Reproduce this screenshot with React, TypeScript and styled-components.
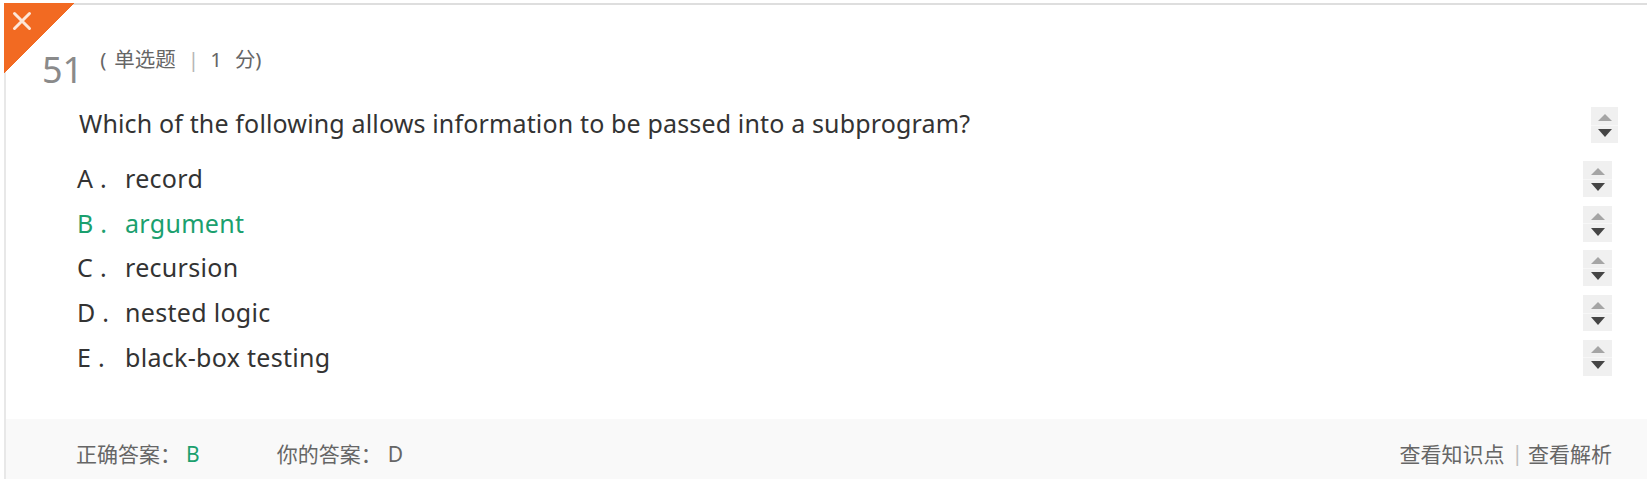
import React from "react";
import styled, { createGlobalStyle } from "styled-components";

const Global = createGlobalStyle`
  html, body { margin: 0; padding: 0; background: #fff; overflow: hidden; }
  body { font-family: "Noto Sans", "Noto Sans CJK SC", sans-serif; color: #333; }
`;

const Card = styled.div`
  position: relative;
  margin: 3px 0 0 4px;
  border-top: 2px solid #dedede;
  border-left: 2px solid #e8e8e8;
`;

const Corner = styled.div`
  position: absolute;
  top: -2px;
  left: -2px;
  width: 70px;
  height: 70px;
  background: linear-gradient(135deg, #f26a22 50%, transparent 50%);
`;

const CloseMark = styled.svg`
  position: absolute;
  top: 6px;
  left: 6px;
  width: 24px;
  height: 24px;
`;

const Header = styled.div`
  display: flex;
  align-items: flex-start;
  padding: 44px 0 0 36px;
  height: 44px;
`;

const Num = styled.span`
  font-size: 36px;
  line-height: 36px;
  color: #8a8a8a;
  margin-top: 3px;
`;

const TypeLabel = styled.span`
  display: flex;
  align-items: center;
  font-size: 20.5px;
  line-height: 21px;
  color: #666;
  margin-left: 17px;
  white-space: pre;
`;

const Paren = styled.span<{ $before: number; $after: number }>`
  margin-left: ${(p) => p.$before}px;
  margin-right: ${(p) => p.$after}px;
`;

const Sep = styled.span`
  color: #b5b5b5;
  margin: 0 11px 0 12px;
`;

const Row = styled.div<{ $indent: number; $right: number; $h: number }>`
  display: flex;
  align-items: center;
  justify-content: space-between;
  height: ${(p) => p.$h}px;
  padding-left: ${(p) => p.$indent}px;
  padding-right: ${(p) => p.$right}px;
`;

const QuestionRow = styled(Row)`
  margin-top: 14px;
`;

const QuestionText = styled.div`
  font-size: 25px;
  letter-spacing: 0.15px;
  color: #333;
  padding-bottom: 4px;
`;

const Options = styled.div`
  margin-top: 14px;
`;

const OptionLine = styled.div<{ $correct?: boolean }>`
  display: flex;
  align-items: center;
  font-size: 25px;
  letter-spacing: 0.3px;
  color: ${(p) => (p.$correct ? "#1ba06e" : "#333")};
  padding-bottom: 2px;
`;

const Key = styled.span`
  width: 48px;
  white-space: pre;
`;

const Spinner = styled.div<{ $w: number }>`
  width: ${(p) => p.$w}px;
  height: 36px;
  display: flex;
  flex-direction: column;
  background: #f0f0f0;
  flex-shrink: 0;
`;

const Half = styled.div`
  flex: 1;
  display: flex;
  align-items: center;
  justify-content: center;
  & + & { border-top: 1px solid #f7f7f7; }
`;

const Up = styled.span`
  width: 0;
  height: 0;
  border-left: 7px solid transparent;
  border-right: 7px solid transparent;
  border-bottom: 7px solid #a5a5a5;
  margin-top: 3px;
`;

const Down = styled.span`
  width: 0;
  height: 0;
  border-left: 7px solid transparent;
  border-right: 7px solid transparent;
  border-top: 8px solid #454545;
  margin-bottom: 3px;
`;

const Footer = styled.div`
  margin-top: 39px;
  background: #f9f9f9;
  height: 72px;
  box-sizing: border-box;
  padding: 0 35px 4px 70px;
  display: flex;
  align-items: center;
  justify-content: space-between;
  font-size: 21px;
  color: #666;
`;

const Answers = styled.div`
  display: flex;
  align-items: center;
`;

const AnswerItem = styled.span<{ $after: number }>`
  margin-right: ${(p) => p.$after}px;
  white-space: pre;
`;

const Val = styled.span<{ $green?: boolean; $gap: number }>`
  color: ${(p) => (p.$green ? "#1ba06e" : "#666")};
  margin-left: ${(p) => p.$gap}px;
`;

const Links = styled.div`
  display: flex;
  align-items: center;
  color: #666;
`;

const LinkSep = styled.span`
  color: #c0c0c0;
  margin: 0 5px 0 7px;
`;

const SpinnerCtl = ({ w }: { w: number }) => (
  <Spinner $w={w}>
    <Half><Up /></Half>
    <Half><Down /></Half>
  </Spinner>
);

const options = [
  { k: "A", t: "record" },
  { k: "B", t: "argument", correct: true },
  { k: "C", t: "recursion" },
  { k: "D", t: "nested logic" },
  { k: "E", t: "black-box testing" },
];

export default function App() {
  return (
    <>
      <Global />
      <Card>
        <Corner>
          <CloseMark viewBox="0 0 24 24">
            <path d="M4.5 4.5 L19.5 19.5 M19.5 4.5 L4.5 19.5" stroke="#fde6d8" strokeWidth="3" strokeLinecap="round" />
          </CloseMark>
        </Corner>
        <Header>
          <Num>51</Num>
          <TypeLabel>
            <Paren $before={0} $after={8}>(</Paren>
            单选题
            <Sep>|</Sep>
            1
            <Paren $before={13} $after={0}>分)</Paren>
          </TypeLabel>
        </Header>
        <QuestionRow $indent={73} $right={29} $h={36}>
          <QuestionText>Which of the following allows information to be passed into a subprogram?</QuestionText>
          <SpinnerCtl w={27} />
        </QuestionRow>
        <Options>
          {options.map((o) => (
            <Row key={o.k} $indent={71} $right={35} $h={44.6}>
              <OptionLine $correct={o.correct}>
                <Key>{`${o.k} .`}</Key>
                <span>{o.t}</span>
              </OptionLine>
              <SpinnerCtl w={29} />
            </Row>
          ))}
        </Options>
        <Footer>
          <Answers>
            <AnswerItem $after={77}>
              正确答案：<Val $green $gap={5}>B</Val>
            </AnswerItem>
            <AnswerItem $after={0}>
              你的答案：<Val $gap={6}>D</Val>
            </AnswerItem>
          </Answers>
          <Links>
            <span>查看知识点</span>
            <LinkSep>|</LinkSep>
            <span>查看解析</span>
          </Links>
        </Footer>
      </Card>
    </>
  );
}
